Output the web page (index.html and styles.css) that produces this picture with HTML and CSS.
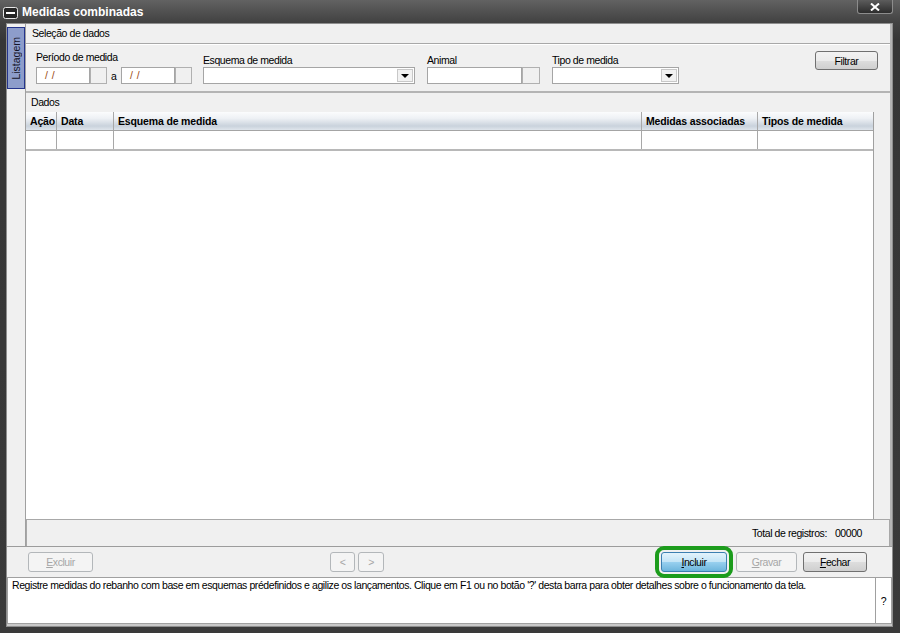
FILE: index.html
```html
<!DOCTYPE html>
<html lang="pt-BR">
<head>
    <meta charset="UTF-8">
    <title>Medidas combinadas</title>
    <link rel="stylesheet" href="styles.css">
</head>
<body>
<div class="window">
    <!-- barra de título -->
    <div class="titlebar">
        <svg class="sys-icon" width="15" height="12" viewBox="0 0 15 12">
            <rect x="0.5" y="0.5" width="14" height="11" rx="2" fill="#262626" stroke="#e6e6e6"/>
            <rect x="3" y="5" width="9" height="2" fill="#ffffff"/>
        </svg>
        <span class="title">Medidas combinadas</span>
        <div class="close">
            <svg width="10" height="8" viewBox="0 0 10 8"><path d="M1 0.5 L9 7.5 M9 0.5 L1 7.5" stroke="#fff" stroke-width="2"/></svg>
        </div>
    </div>

    <div class="frame">
        <div class="main">
            <div class="tabs">
                <div class="tab"><span>Listagem</span></div>
            </div>

            <div class="content">
                <div class="section-head">Seleção de dados</div>

                <!-- filtros -->
                <div class="filters">
                    <div class="field periodo">
                        <label>Período de medida</label>
                        <div class="ctrl-row">
                            <div class="input date">/ /</div><div class="side-btn"></div>
                            <span class="between">a</span>
                            <div class="input date">/ /</div><div class="side-btn"></div>
                        </div>
                    </div>
                    <div class="field esquema">
                        <label>Esquema de medida</label>
                        <div class="input combo w-esquema"><div class="drop"><i></i></div></div>
                    </div>
                    <div class="field animal">
                        <label>Animal</label>
                        <div class="ctrl-row">
                            <div class="input w-animal"></div><div class="side-btn wide"></div>
                        </div>
                    </div>
                    <div class="field tipo">
                        <label>Tipo de medida</label>
                        <div class="input combo w-tipo"><div class="drop"><i></i></div></div>
                    </div>
                    <button class="btn filtrar">Filtrar</button>
                </div>

                <div class="data-label">Dados</div>

                <!-- grade -->
                <div class="grid-wrap">
                    <div class="grid">
                        <div class="grid-head">
                            <div>Ação</div>
                            <div>Data</div>
                            <div>Esquema de medida</div>
                            <div>Medidas associadas</div>
                            <div>Tipos de medida</div>
                        </div>
                        <div class="grid-row">
                            <div></div><div></div><div></div><div></div><div></div>
                        </div>
                    </div>
                    <div class="scroll-col"></div>
                </div>

                <div class="status">Total de registros:<span class="count">00000</span></div>
            </div>
        </div>

        <!-- botões -->
        <div class="buttonbar">
            <button class="btn disabled excluir"><u>E</u>xcluir</button>
            <button class="btn disabled prev">&lt;</button>
            <button class="btn disabled next">&gt;</button>
            <button class="btn primary incluir"><u>I</u>ncluir</button>
            <button class="btn disabled gravar"><u>G</u>ravar</button>
            <button class="btn fechar"><u>F</u>echar</button>
        </div>

        <div class="message">
            <div class="msg-text">Registre medidas do rebanho com base em esquemas prédefinidos e agilize os lançamentos. Clique em F1 ou no botão '?' desta barra para obter detalhes sobre o funcionamento da tela.</div>
            <div class="help">?</div>
        </div>
    </div>
</div>
</body>
</html>
```

FILE: styles.css
```css
* { box-sizing: border-box; }
body { margin: 0; font-family: "Liberation Sans", Arial, sans-serif; font-size: 10.5px; letter-spacing: -0.42px;
       color: #000; background: #2c2c2c; }

.window { width: 900px; height: 633px; display: flex; flex-direction: column;
          background: linear-gradient(#626262, #424242 22px, #363636 40px, #3a3a3a); }

/* barra de título */
.titlebar { height: 23px; display: flex; align-items: center; padding-left: 3px; }
.sys-icon { margin-top: 2px; }
.title { margin-left: 4px; color: #fff; font-weight: bold; font-size: 12px; letter-spacing: 0; }
.close { margin-left: auto; margin-right: 7px; align-self: flex-start; width: 36px; height: 14px;
         border: 1px solid #8c8c8c; border-top: 0; border-radius: 0 0 3px 3px;
         background: linear-gradient(#5c5c5c, #2c2c2c); display: flex; align-items: center; justify-content: center; }

.frame { flex: 1; margin: 0 7px 6px 6px; border: 1px solid #8e8e8e; background: #c9c9c9;
         display: flex; flex-direction: column; }
.main { height: 523px; display: flex; background: #f0f0f0; border-bottom: 1px solid #9c9c9c; }

/* abas laterais */
.tabs { width: 19px; border-right: 1px solid #a0a0a0; padding-top: 3px; }
.tab { width: 18px; height: 62px; background: #8d9dcb; border: 1px solid #24348c;
       display: flex; align-items: center; justify-content: center; }
.tab span { writing-mode: vertical-rl; transform: rotate(180deg); color: #141428; letter-spacing: 0; }

.content { flex: 1; display: flex; flex-direction: column; border-right: 2px solid #b4b4b4; }
.section-head { height: 20px; line-height: 19px; padding-left: 6px; border-bottom: 1px solid #a8a8a8; }

/* filtros */
.filters { height: 49px; display: flex; align-items: flex-start; padding: 9px 12px 0 10px;
           border-top: 1px solid #fff; border-bottom: 2px solid #b4b4b4; }
.field label { display: block; line-height: 13px; }
.periodo label { margin-top: -3px; margin-bottom: 3px; }
.esquema { margin-left: 11px; }
.animal, .tipo { margin-left: 12px; }
.ctrl-row { display: flex; align-items: center; }
.input { height: 17px; background: #fff; border: 1px solid #a5a5a5; }
.date { width: 54px; padding-left: 8px; line-height: 15px; color: #9a4a10; letter-spacing: 0.5px; }
.side-btn { width: 17px; height: 17px; background: #f0f0f0; border: 1px solid #b0b0b0; }
.side-btn.wide { width: 18px; }
.between { margin: 0 3px 0 4px; width: 7px; }
.w-esquema { width: 212px; }
.w-animal { width: 95px; }
.w-tipo { width: 127px; }
.combo { display: flex; justify-content: flex-end; padding: 1px; }
.drop { width: 16px; height: 13px; background: #f2f2f2; border: 1px solid #c8c8c8;
        display: flex; align-items: center; justify-content: center; }
.drop i { width: 0; height: 0; border-left: 4px solid transparent; border-right: 4px solid transparent; border-top: 4px solid #000; }

/* botões */
.btn { height: 20px; padding: 0; font: inherit; letter-spacing: inherit; color: #000; text-align: center;
       border: 1px solid #707070; border-radius: 3px;
       background: linear-gradient(#f2f2f2, #ebebeb 50%, #dddddd 51%, #cfcfcf); }
.btn u { text-decoration: underline; }
.btn.disabled { border-color: #b3b7ba; background: #f4f4f4; color: #a6a6a6; }
.btn.primary { border-color: #3c7fb1; background: linear-gradient(#e3f3fc, #c2e4f6 50%, #98d0ef 51%, #6db5dc);
               outline: 4px solid #1c9c1c; outline-offset: 2px; }
.filtrar { width: 63px; height: 19px; margin-left: auto; margin-top: -3px; }

.data-label { height: 19px; line-height: 19px; padding-left: 5px; }

/* grade */
.grid-wrap { flex: 1; display: flex; }
.grid { flex: 1; background: #fff; border-right: 1px solid #a0a0a0; }
.scroll-col { width: 16px; background: #f0f0f0; }
.grid-head, .grid-row { display: grid; grid-template-columns: 31px 57px 528px 116px 115px; }
.grid-head { height: 19px; border-bottom: 1px solid #a4a4a4;
             background: linear-gradient(#fbfcfd, #eef1f5 35%, #c9d2dc 78%, #dfe5ec); }
.grid-head div { padding-left: 4px; line-height: 18px; font-weight: bold; letter-spacing: -0.15px;
                 border-right: 1px solid #a8a8a8; }
.grid-head div:last-child, .grid-row div:last-child { border-right: 0; }
.grid-row { height: 20px; border-bottom: 2px solid #b8b8b8; }
.grid-row div { border-right: 1px solid #a8a8a8; }

.status { height: 27px; display: flex; justify-content: flex-end; align-items: center; padding-right: 27px;
          border: 1px solid #a8a8a8; border-bottom: 0; }
.count { margin-left: 8px; }

/* barra de botões */
.buttonbar { height: 31px; display: flex; align-items: center; padding-left: 21px; background: #f0f0f0;
             border-bottom: 1px solid #a0a0a0; }
.excluir { width: 65px; }
.prev { width: 25px; margin-left: 237px; }
.next { width: 26px; margin-left: 3px; }
.incluir { width: 66px; margin-left: 277px; }
.gravar { width: 61px; margin-left: 9px; }
.fechar { width: 64px; margin-left: 6px; }

/* mensagem */
.message { height: 46px; display: flex; background: #fff; border: 1px solid #a0a0a0; border-top: 0; }
.msg-text { flex: 1; padding: 1px 4px; line-height: 13px; }
.help { width: 16px; border-left: 1px solid #a0a0a0; display: flex; align-items: center; justify-content: center; }
```
